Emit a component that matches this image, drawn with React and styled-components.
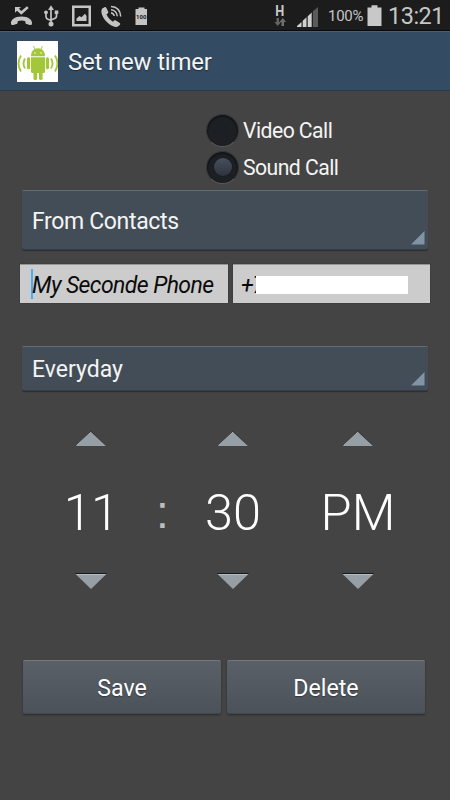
import React from "react";
import { useState } from "react";
import styled, { createGlobalStyle } from "styled-components";

const GlobalStyle = createGlobalStyle`
  * {
    box-sizing: border-box;
  }
  body {
    margin: 0;
    background-color: #444444;
    font-family: Roboto, "Liberation Sans", sans-serif;
  }
`;

const Screen = styled.div`
  width: 450px;
  height: 800px;
  overflow: hidden;
  display: flex;
  flex-direction: column;
  background-color: #444444;
  color: #f4f4f4;
`;

const StatusBar = styled.div`
  height: 31px;
  display: flex;
  justify-content: space-between;
  background-color: #1c1c1c;
  border-bottom: 1px solid #0c0806;
  color: #c6c6c6;
`;

const Clock = styled.span`
  width: 62px;
  margin-left: 6px;
  font-size: 23.5px;
  line-height: 33px;
  letter-spacing: -0.5px;
  white-space: nowrap;
`;

const Percent = styled.span`
  width: 39px;
  margin-left: 9px;
  font-size: 15px;
  line-height: 33px;
  letter-spacing: -0.3px;
  white-space: nowrap;
`;

const StatusGroup = styled.div`
  display: flex;
`;

const Header = styled.div`
  height: 60px;
  padding: 0 17px;
  display: flex;
  align-items: center;
  background-color: #344c63;
  border-top: 1px solid #4a5f72;
  border-bottom: 1px solid #283a4b;
`;

const Title = styled.div`
  margin-left: 10px;
  padding-top: 2px;
  font-size: 24px;
  line-height: 58px;
  letter-spacing: -0.2px;
  text-shadow: 0 1px 1px #1b2c3c;
`;

const RadioGroup = styled.div`
  margin: 22px 0 0 206px;
  display: flex;
  flex-direction: column;
  gap: 3px;
`;

const RadioRow = styled.div`
  height: 34px;
  display: flex;
  align-items: center;
  cursor: pointer;
`;

const RadioDot = styled.div`
  width: 33px;
  height: 33px;
  margin-right: 4px;
  border-radius: 50%;
  display: flex;
  align-items: center;
  justify-content: center;
  border: 1.5px solid #343537;
  border-bottom-color: #59595a;
  background-color: #1c2025;
  box-shadow: inset 0 1px 1px 1px #121518;

  &::after {
    content: "";
    display: ${(props) => (props.$checked ? "block" : "none")};
    width: 18px;
    height: 18px;
    border-radius: 50%;
    background: linear-gradient(#48505d, #2d333e);
    box-shadow: 0 0 1px #101318;
  }
`;

const RadioLabel = styled.span`
  padding-top: 2px;
  font-size: 21.2px;
  line-height: 32px;
  letter-spacing: -0.55px;
  white-space: nowrap;
`;

const Spinner = styled.div`
  height: ${(props) => props.$height};
  margin: ${(props) => props.$margin};
  padding: 0 3px 4px 10px;
  display: flex;
  justify-content: space-between;
  align-items: flex-end;
  background-color: #434d57;
  border-top: 1px solid #626c76;
  border-bottom: 1px solid #343c45;
  border-radius: 2px;
  box-shadow: 0 1px 1px #2c2e31;
`;

const SpinnerText = styled.span`
  align-self: center;
  padding-top: ${(props) => props.$drop};
  font-size: 23px;
  line-height: 26px;
  letter-spacing: ${(props) => props.$spacing || 0};
`;

const FieldRow = styled.div`
  margin: 14px 20px 0;
  height: 39px;
  display: grid;
  grid-template-columns: 208px 197px;
  gap: 5px;
`;

const Field = styled.div`
  display: flex;
  align-items: center;
  padding-left: ${(props) => props.$left};
  background-color: #cccccc;
  border-top: 1px solid #969696;
  box-shadow: 0 0 1px #2c2c2c;
  color: #0b0b0b;
  font-size: 23px;
  font-style: italic;
  letter-spacing: -0.58px;
  white-space: nowrap;
`;

const Caret = styled.span`
  width: 2px;
  height: 30px;
  margin-right: -2px;
  background-color: #4aacf4;
`;

const FieldText = styled.span`
  padding: 2px 0 0 1px;
`;

const PhonePrefix = styled.span`
  width: 15px;
  padding-top: 2px;
  letter-spacing: -1.2px;
`;

const HiddenNumber = styled.span`
  width: 152px;
  height: 18px;
  margin-top: 2px;
  background-color: #ffffff;
  z-index: 1;
`;

const Picker = styled.div`
  margin: 40px 0 0 62px;
  height: 158px;
  display: grid;
  grid-template-columns: 58px 84px 58px 51px 90px;
`;

const Wheel = styled.div`
  display: flex;
  flex-direction: column;
  align-items: center;
  justify-content: space-between;
`;

const Value = styled.div`
  padding-top: 6px;
  font-size: 50.5px;
  font-weight: 300;
  line-height: 60px;
  letter-spacing: ${(props) => props.$spacing || 0};
  color: #ffffff;
  white-space: nowrap;
`;

const Colon = styled.div`
  display: flex;
  align-items: center;
  justify-content: center;
  padding: 4px 0 0 1px;
  font-family: "Liberation Sans", sans-serif;
  font-size: 46px;
  line-height: 60px;
  color: #bdbdbd;
`;

const ButtonRow = styled.div`
  margin: 71px 25px 0 23px;
  display: grid;
  grid-template-columns: 198px 198px;
  gap: 6px;
`;

const Button = styled.button`
  height: 54px;
  padding: 2px 0 0;
  border: none;
  border-top: 1px solid #74777f;
  border-bottom: 1px solid #42484f;
  border-radius: 2px;
  background: linear-gradient(#596067, #4b525a);
  box-shadow: 0 1px 2px #29292b;
  color: #ffffff;
  font-family: inherit;
  font-size: 23.2px;
  text-shadow: 0 1px 1px #33383e;
  cursor: pointer;
`;

const Corner = () => (
  <svg width="14" height="14" viewBox="0 0 14 14">
    <path d="M13.5 0V13.5H0Z" fill="#8293a5" />
  </svg>
);

const Arrow = ({ down }) => (
  <svg width="32" height="16" viewBox="0 0 32 16">
    {down ? (
      <>
        <path d="M0.5 1H31.5L16 16Z" fill="#969fa6" />
        <path d="M0.5 0.5H31.5" stroke="#171717" />
        <path d="M1.5 1.5H30.5" stroke="#b5bdc3" />
      </>
    ) : (
      <>
        <path d="M16 0L31.5 15H0.5Z" fill="#2f3031" />
        <path d="M16 1L31 15H1Z" fill="#969fa6" />
        <path d="M1.5 14.5L16 1" stroke="#b5bdc3" strokeWidth="0.8" />
      </>
    )}
  </svg>
);

const NotificationIcons = () => (
  <svg width="155" height="30" viewBox="0 0 155 30" fill="#c4c4c4">
    {/* missed call */}
    <path d="M11 23.5C10.500 20 14.500 16.500 21.500 16.500S32.500 20 32 23.500C31.900 24.800 31 25.200 29.800 24.900L26.500 24C25.500 23.700 25.300 22.800 25.300 21.200C23 20.400 20 20.400 17.700 21.200C17.700 22.800 17.500 23.700 16.500 24L13.200 24.900C12 25.200 11.100 24.800 11 23.500Z" />
    <path d="M15 7H21L19 8.800L21.300 11L27 6.200L28.700 8L21.300 14.700L17 10.800L15 12.700Z" />
    {/* usb */}
    <g fill="none" stroke="#c4c4c4" strokeWidth="1.7">
      <path d="M51 9V24M46 12V16.500Q46 18.500 48 19.300L51 20.500M56.500 12V16Q56.500 18 54 18.700L51 20" />
    </g>
    <path d="M51 5.300L54 10H48Z" />
    <circle cx="46" cy="12.300" r="1.900" />
    <path d="M54.700 10.500H58.300V14H54.700Z" />
    <circle cx="51" cy="24" r="2.500" />
    {/* gallery */}
    <path d="M72 5.500H91V26.500H72ZM74.500 8V24H88.500V8Z" fillRule="evenodd" />
    <path d="M76.500 21V18.500L79.500 16L81.500 17.300L85 13.700L86.500 16V21Z" />
    {/* call */}
    <path d="M102.200 8.500L104.500 7.200C105.300 6.800 106 7.200 106.400 8L108.200 11.800C108.600 12.800 107.900 13.500 106.500 14.300C107.500 17.300 110.300 20.300 113 21.700C114.200 20.300 115 19.900 115.900 20.500L119.400 22.700C120.300 23.300 120.500 24 119.900 24.700L118.300 26.300C114.500 28.700 106.500 23.300 103.300 17.500C101.200 13.700 100.700 10.300 102.200 8.500Z" />
    <g fill="none" stroke="#c4c4c4" strokeWidth="1.500">
      <path d="M111 6.500Q120 7 120.700 16.500M111 9.700Q116.700 10.300 117.300 16.300M111 12.700Q113.800 13.300 114.200 16" />
    </g>
    {/* battery notification */}
    <path d="M138.500 7.500H144.500V9H147V25H135.500V9H138.500Z" />
    <text
      x="141.200"
      y="18.500"
      fill="#1c1c1c"
      fontSize="6"
      fontWeight="700"
      textAnchor="middle"
    >
      100
    </text>
  </svg>
);

const SignalIcons = () => (
  <svg width="46" height="30" viewBox="0 0 46 30">
    <text
      x="2.300"
      y="16"
      fill="#c8c8c8"
      fontSize="14.5"
      fontWeight="700"
      textLength="9"
      lengthAdjust="spacingAndGlyphs"
    >
      H
    </text>
    <path d="M3.500 18H6V22H8L4.700 26L1.500 22H3.500Z" fill="#646464" />
    <path d="M8.500 26H11V22H13L9.800 18L6.500 22H8.500Z" fill="#707070" />
    <path d="M24 27V26L28.500 22V27Z" fill="#d0d0d0" />
    <path d="M29.700 27V20.700L33.500 17.300V27Z" fill="#d0d0d0" />
    <path d="M34.700 27V16.200L38.700 12.500V27Z" fill="#d0d0d0" />
    <path d="M39.900 27V11.200L45 7V27Z" fill="#5a5a5a" />
  </svg>
);

const BatteryIcon = () => (
  <svg width="15" height="30" viewBox="0 0 15 30">
    <path d="M4.500 5.300H10.500V7.500H14.500V26H0.500V7.500H4.500Z" fill="#c8c8c8" />
  </svg>
);

const AppIcon = () => (
  <svg width="41" height="41" viewBox="0 0 41 41">
    <rect width="41" height="41" fill="#ffffff" />
    <g fill="#a4c639">
      <path d="M14 15.300C14 10.200 17 7.300 21 7.300S28 10.200 28 15.300Z" />
      <path d="M14 16.300H28V30.500Q28 32 26.500 32H15.500Q14 32 14 30.500Z" />
      <rect x="10" y="16.300" width="3.200" height="12" rx="1.500" />
      <rect x="28.800" y="16.300" width="3.200" height="12" rx="1.500" />
      <rect x="16.500" y="29" width="3.600" height="10" rx="1.600" />
      <rect x="22" y="29" width="3.600" height="10" rx="1.600" />
    </g>
    <g fill="none" stroke="#a4c639">
      <path d="M16.500 5L18 8.500M25.500 5L24 8.500" strokeWidth="0.900" />
      <path
        d="M8 17.500Q5 22.500 8 27.500M4 14.500Q-1 22.500 4 30.500M34 17.500Q37 22.500 34 27.500M38 14.500Q43 22.500 38 30.500"
        strokeWidth="1.800"
      />
    </g>
    <circle cx="18" cy="12" r="0.800" fill="#ffffff" />
    <circle cx="24" cy="12" r="0.800" fill="#ffffff" />
  </svg>
);

const App = () => {
  const [callType, setCallType] = useState("Sound Call");

  return (
    <Screen>
      <GlobalStyle />
      <StatusBar>
        <NotificationIcons />
        <StatusGroup>
          <SignalIcons />
          <Percent>100%</Percent>
          <BatteryIcon />
          <Clock>13:21</Clock>
        </StatusGroup>
      </StatusBar>

      <Header>
        <AppIcon />
        <Title>Set new timer</Title>
      </Header>

      <RadioGroup>
        {["Video Call", "Sound Call"].map((type) => (
          <RadioRow key={type} onClick={() => setCallType(type)}>
            <RadioDot $checked={callType === type} />
            <RadioLabel>{type}</RadioLabel>
          </RadioRow>
        ))}
      </RadioGroup>

      <Spinner $height="60px" $margin="6px 22px 0">
        <SpinnerText $drop="7px" $spacing="-0.35px">
          From Contacts
        </SpinnerText>
        <Corner />
      </Spinner>

      <FieldRow>
        <Field $left="11px">
          <Caret />
          <FieldText>My Seconde Phone</FieldText>
        </Field>
        <Field $left="8px">
          <PhonePrefix>+7</PhonePrefix>
          <HiddenNumber />
        </Field>
      </FieldRow>

      <Spinner $height="45px" $margin="43px 22px 0">
        <SpinnerText $drop="7px">Everyday</SpinnerText>
        <Corner />
      </Spinner>

      <Picker>
        <Wheel>
          <Arrow />
          <Value $spacing="-0.8px">11</Value>
          <Arrow down />
        </Wheel>
        <Colon>:</Colon>
        <Wheel>
          <Arrow />
          <Value>30</Value>
          <Arrow down />
        </Wheel>
        <span />
        <Wheel>
          <Arrow />
          <Value>PM</Value>
          <Arrow down />
        </Wheel>
      </Picker>

      <ButtonRow>
        <Button>Save</Button>
        <Button>Delete</Button>
      </ButtonRow>
    </Screen>
  );
};

export default App;
